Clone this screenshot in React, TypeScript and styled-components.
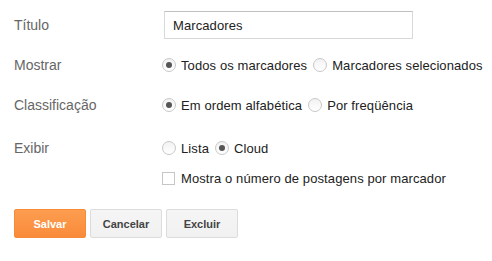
import React from "react";
import styled, { createGlobalStyle } from "styled-components";

const Global = createGlobalStyle`
  html, body { margin: 0; padding: 0; background: #fff; }
  body { font-family: Arial, "Liberation Sans", sans-serif; font-size: 13px; color: #222; }
`;

const Form = styled.div`
  padding: 11px 0 0 14px;
`;

const Row = styled.div<{ $top?: number }>`
  display: flex;
  align-items: center;
  height: 28px;
  white-space: nowrap;
  margin-top: ${(p) => p.$top ?? 0}px;
`;

const Label = styled.div`
  width: 150px;
  flex: none;
  color: #666;
  font-size: 14px;
`;

const Field = styled.div`
  display: flex;
  align-items: center;
  flex: none;
`;

const TextInput = styled.input`
  box-sizing: border-box;
  width: 249px;
  height: 28px;
  border: 1px solid #d9d9d9;
  border-top-color: #c0c0c0;
  padding: 0 8px;
  font-family: Arial, "Liberation Sans", sans-serif;
  font-size: 13px;
  letter-spacing: 0.1px;
  color: #222;
  outline: none;
`;

const Option = styled.label`
  display: inline-flex;
  align-items: center;
  margin-right: 8px;
  color: #222;
  font-size: 13px;
  letter-spacing: 0.1px;
  cursor: default;
`;

const Radio = styled.span<{ $checked?: boolean }>`
  box-sizing: border-box;
  width: 14px;
  height: 14px;
  border-radius: 50%;
  border: 1px solid #c8c8c8;
  background: linear-gradient(#f2f2f2, #fff);
  margin: 0 5px 0 -2px;
  display: inline-flex;
  align-items: center;
  justify-content: center;
  &::after {
    content: "";
    display: ${(p) => (p.$checked ? "block" : "none")};
    width: 6px;
    height: 6px;
    border-radius: 50%;
    background: #555;
  }
`;

const Checkbox = styled.span`
  box-sizing: border-box;
  width: 13px;
  height: 13px;
  border: 1px solid #c6c6c6;
  background: #fff;
  margin: 0 6px 0 -2px;
  display: inline-block;
`;

const Buttons = styled.div`
  display: flex;
  gap: 4px;
  margin-top: 17px;
`;

const Button = styled.button<{ $primary?: boolean }>`
  box-sizing: border-box;
  width: 72px;
  height: 29px;
  border-radius: 2px;
  font-family: Arial, "Liberation Sans", sans-serif;
  font-size: 11px;
  font-weight: bold;
  padding: 0;
  border: 1px solid ${(p) => (p.$primary ? "#f68c38" : "#dcdcdc")};
  color: ${(p) => (p.$primary ? "#fff" : "#444")};
  background: ${(p) =>
    p.$primary ? "linear-gradient(#fd9d50, #f98b3a)" : "linear-gradient(#f5f5f5, #f1f1f1)"};
`;

export default function App() {
  return (
    <>
      <Global />
      <Form>
        <Row>
          <Label>Título</Label>
          <TextInput defaultValue="Marcadores" />
        </Row>
        <Row $top={12}>
          <Label>Mostrar</Label>
          <Field>
            <Option><Radio $checked />Todos os marcadores</Option>
            <Option><Radio />Marcadores selecionados</Option>
          </Field>
        </Row>
        <Row $top={12}>
          <Label>Classificação</Label>
          <Field>
            <Option><Radio $checked />Em ordem alfabética</Option>
            <Option><Radio />Por freqüência</Option>
          </Field>
        </Row>
        <Row $top={15}>
          <Label>Exibir</Label>
          <Field>
            <Option><Radio />Lista</Option>
            <Option><Radio $checked />Cloud</Option>
          </Field>
        </Row>
        <Row $top={2}>
          <Label />
          <Field>
            <Option><Checkbox />Mostra o número de postagens por marcador</Option>
          </Field>
        </Row>
        <Buttons>
          <Button $primary>Salvar</Button>
          <Button>Cancelar</Button>
          <Button>Excluir</Button>
        </Buttons>
      </Form>
    </>
  );
}
